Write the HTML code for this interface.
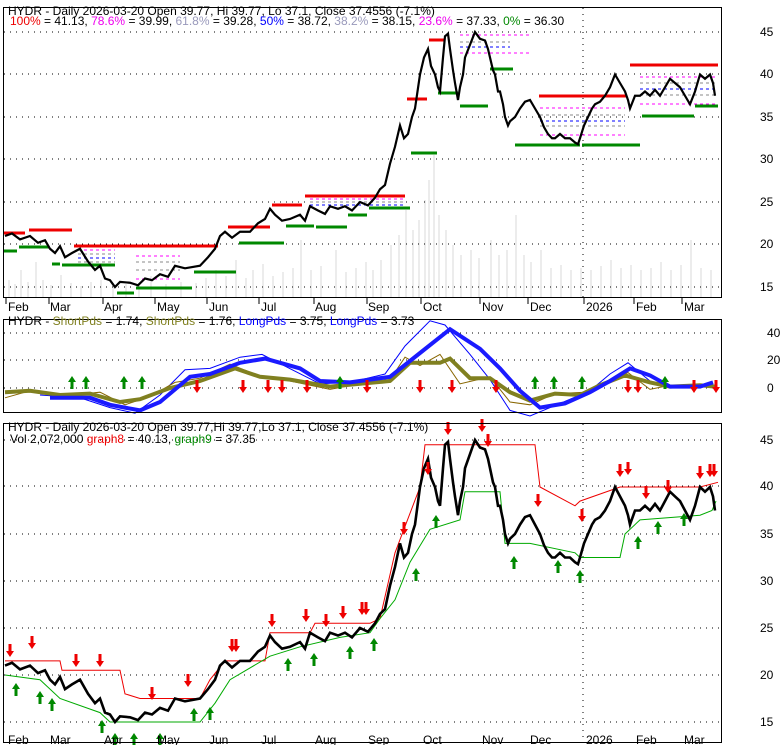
<!DOCTYPE html>
<html><head><meta charset="utf-8"><style>
body{margin:0;background:#fff;width:780px;height:745px;overflow:hidden;font-family:"Liberation Sans",sans-serif}
svg text{font-family:"Liberation Sans",sans-serif;font-size:12px}
</style></head><body>
<svg width="780" height="745" xmlns="http://www.w3.org/2000/svg">
<defs>
<g id="up"><path d="M0,-7 L-4,-1 L-1.5,-1 L-1.5,6 L1.5,6 L1.5,-1 L4,-1Z" fill="#008800"/></g>
<g id="dn"><path d="M0,7 L-4,1 L-1.5,1 L-1.5,-6 L1.5,-6 L1.5,1 L4,1Z" fill="#ee0000"/></g>
</defs>
<!-- PANEL 1 -->
<g fill="#ececec">
<rect x="8" y="280" width="2" height="17"/><rect x="14" y="284" width="2" height="13"/><rect x="20" y="270" width="2" height="27"/><rect x="27" y="282" width="2" height="15"/><rect x="35" y="262" width="2" height="35"/><rect x="42" y="280" width="2" height="17"/><rect x="50" y="285" width="2" height="12"/><rect x="60" y="275" width="2" height="22"/><rect x="70" y="283" width="2" height="14"/><rect x="80" y="286" width="2" height="11"/><rect x="90" y="282" width="2" height="15"/><rect x="100" y="280" width="2" height="17"/><rect x="112" y="285" width="2" height="12"/><rect x="125" y="284" width="2" height="13"/><rect x="138" y="283" width="2" height="14"/><rect x="150" y="276" width="2" height="21"/><rect x="165" y="284" width="2" height="13"/><rect x="180" y="282" width="2" height="15"/><rect x="195" y="283" width="2" height="14"/><rect x="205" y="278" width="2" height="19"/><rect x="215" y="270" width="2" height="27"/><rect x="225" y="276" width="2" height="21"/><rect x="235" y="260" width="2" height="37"/><rect x="245" y="278" width="2" height="19"/><rect x="252" y="270" width="2" height="27"/><rect x="262" y="264" width="2" height="33"/><rect x="272" y="276" width="2" height="21"/><rect x="282" y="272" width="2" height="25"/><rect x="292" y="268" width="2" height="29"/><rect x="300" y="240" width="2" height="57"/><rect x="310" y="270" width="2" height="27"/><rect x="320" y="266" width="2" height="31"/><rect x="335" y="250" width="2" height="47"/><rect x="345" y="272" width="2" height="25"/><rect x="355" y="268" width="2" height="29"/><rect x="365" y="262" width="2" height="35"/><rect x="372" y="270" width="2" height="27"/><rect x="380" y="260" width="2" height="37"/><rect x="390" y="245" width="2" height="52"/><rect x="398" y="235" width="2" height="62"/><rect x="405" y="210" width="2" height="87"/><rect x="412" y="230" width="2" height="67"/><rect x="418" y="220" width="2" height="77"/><rect x="424" y="200" width="2" height="97"/><rect x="428" y="180" width="2" height="117"/><rect x="433" y="155" width="2" height="142"/><rect x="438" y="215" width="2" height="82"/><rect x="445" y="230" width="2" height="67"/><rect x="452" y="245" width="2" height="52"/><rect x="460" y="255" width="2" height="42"/><rect x="470" y="250" width="2" height="47"/><rect x="478" y="258" width="2" height="39"/><rect x="490" y="240" width="2" height="57"/><rect x="498" y="255" width="2" height="42"/><rect x="506" y="250" width="2" height="47"/><rect x="515" y="215" width="2" height="82"/><rect x="523" y="255" width="2" height="42"/><rect x="530" y="262" width="2" height="35"/><rect x="540" y="250" width="2" height="47"/><rect x="550" y="268" width="2" height="29"/><rect x="560" y="265" width="2" height="32"/><rect x="570" y="270" width="2" height="27"/><rect x="580" y="268" width="2" height="29"/><rect x="590" y="270" width="2" height="27"/><rect x="600" y="266" width="2" height="31"/><rect x="610" y="260" width="2" height="37"/><rect x="620" y="268" width="2" height="29"/><rect x="630" y="265" width="2" height="32"/><rect x="640" y="270" width="2" height="27"/><rect x="650" y="268" width="2" height="29"/><rect x="660" y="262" width="2" height="35"/><rect x="670" y="270" width="2" height="27"/><rect x="680" y="265" width="2" height="32"/><rect x="690" y="240" width="2" height="57"/><rect x="700" y="268" width="2" height="29"/><rect x="710" y="270" width="2" height="27"/>
</g>
<g stroke="#000" stroke-dasharray="1,5" stroke-width="1">
<line x1="4" y1="32" x2="722" y2="32"/><line x1="4" y1="74" x2="722" y2="74"/><line x1="4" y1="117" x2="722" y2="117"/><line x1="4" y1="159" x2="722" y2="159"/><line x1="4" y1="202" x2="722" y2="202"/><line x1="4" y1="244" x2="722" y2="244"/><line x1="4" y1="287" x2="722" y2="287"/>
<line x1="583" y1="8" x2="583" y2="297"/>
</g>
<g stroke-width="3">
<g stroke="#ee0000"><line x1="4" y1="233" x2="25" y2="233"/><line x1="29" y1="230" x2="72" y2="230"/><line x1="74" y1="246" x2="218" y2="246"/><line x1="228" y1="227" x2="270" y2="227"/><line x1="272" y1="205" x2="302" y2="205"/><line x1="305" y1="196" x2="405" y2="196"/><line x1="407" y1="99" x2="427" y2="99"/><line x1="429" y1="40" x2="445" y2="40"/><line x1="539" y1="96" x2="627" y2="96"/><line x1="630" y1="65" x2="718" y2="65"/></g>
<g stroke="#008800"><line x1="4" y1="251" x2="17" y2="251"/><line x1="19" y1="247" x2="49" y2="247"/><line x1="52" y1="264" x2="60" y2="264"/><line x1="62" y1="265" x2="115" y2="265"/><line x1="117" y1="293" x2="134" y2="293"/><line x1="136" y1="288" x2="192" y2="288"/><line x1="194" y1="272" x2="236" y2="272"/><line x1="239" y1="243" x2="284" y2="243"/><line x1="286" y1="226" x2="314" y2="226"/><line x1="316" y1="227" x2="347" y2="227"/><line x1="348" y1="215" x2="367" y2="215"/><line x1="369" y1="208" x2="410" y2="208"/><line x1="411" y1="153" x2="437" y2="153"/><line x1="438" y1="93" x2="458" y2="93"/><line x1="460" y1="106" x2="488" y2="106"/><line x1="490" y1="69" x2="513" y2="69"/><line x1="515" y1="145" x2="580" y2="145"/><line x1="582" y1="145" x2="640" y2="145"/><line x1="642" y1="116" x2="694" y2="116"/><line x1="695" y1="106" x2="718" y2="106"/></g>
</g>
<g stroke-width="1" stroke-dasharray="3,3">
<line x1="78" y1="250" x2="115" y2="250" stroke="#f0f"/><line x1="78" y1="254" x2="115" y2="254" stroke="#888"/><line x1="78" y1="258" x2="115" y2="258" stroke="#00f"/><line x1="78" y1="262" x2="115" y2="262" stroke="#888"/>
<line x1="136" y1="256" x2="180" y2="256" stroke="#f0f"/><line x1="136" y1="262" x2="180" y2="262" stroke="#888"/><line x1="136" y1="270" x2="180" y2="270" stroke="#888"/><line x1="136" y1="279" x2="180" y2="279" stroke="#f0f"/>
<line x1="310" y1="199" x2="405" y2="199" stroke="#f0f"/><line x1="310" y1="202" x2="405" y2="202" stroke="#888"/><line x1="310" y1="205" x2="405" y2="205" stroke="#00f"/>
<line x1="540" y1="108" x2="625" y2="108" stroke="#f0f"/><line x1="540" y1="115" x2="625" y2="115" stroke="#888"/><line x1="540" y1="121" x2="625" y2="121" stroke="#00f"/><line x1="540" y1="126" x2="625" y2="126" stroke="#888"/><line x1="540" y1="135" x2="625" y2="135" stroke="#f0f"/>
<line x1="640" y1="77" x2="715" y2="77" stroke="#f0f"/><line x1="640" y1="83" x2="715" y2="83" stroke="#888"/><line x1="640" y1="89" x2="715" y2="89" stroke="#00f"/><line x1="640" y1="95" x2="715" y2="95" stroke="#888"/><line x1="640" y1="104" x2="715" y2="104" stroke="#f0f"/>
<line x1="460" y1="35" x2="530" y2="35" stroke="#f0f"/><line x1="460" y1="42" x2="510" y2="42" stroke="#888"/><line x1="460" y1="47" x2="510" y2="47" stroke="#00f"/><line x1="460" y1="53" x2="530" y2="53" stroke="#f0f"/>
</g>
<polyline transform="matrix(1 0 0 -8.5 0 414.5)" vector-effect="non-scaling-stroke" fill="none" stroke="#000" stroke-width="2.2" points="5,21 12,21.3 20,20.6 30,21 38,20.2 45,20.5 50,19.5 55,19 60,19.8 65,18.5 72,19 80,19.5 88,18 95,17 100,17.5 105,16 110,15.8 115,15 120,15.6 130,15.5 138,15.2 145,16 152,15.8 160,16.5 168,16.2 175,17.5 185,17.2 200,17.5 208,18.5 215,19.5 220,21 225,21.5 232,20.8 240,21.5 250,21.5 258,22.5 265,23 270,24.2 275,23.5 282,22.8 290,23 300,23.5 305,22.8 310,24.5 318,24 325,23.6 330,24.5 338,24.2 345,24.5 352,24 360,25 368,24.6 375,25.5 380,26.5 385,27 390,29.5 395,31.5 400,34 404,32.5 408,33 412,35 415,36 420,40 424,42 428,43 431,41 435,40 438,38.5 440,38 443,42 445,44.5 448,44.8 450,43 453,40.5 455,39 458,37 460,38.5 463,40 465,42 470,43.5 475,45 480,44.2 485,44 488,43 490,42 493,40.5 495,40 498,38 500,38 503,36.5 505,35 508,34 510,34.5 515,35 520,36 525,36.8 530,37 535,36 540,35 544,33.8 548,33 552,32.5 555,32.5 560,33 565,32.5 570,32.5 575,32 578,31.8 580,32.5 584,34 588,35 592,36 595,36.5 600,36.8 605,37.5 610,38.5 615,40 620,39 625,38 628,37 630,36 635,37.5 640,37.5 645,38 650,37.5 655,38.2 660,37.5 665,38.5 670,39.5 675,39 680,38.5 685,37.5 690,36.5 695,38 700,40 705,39.5 710,40 713,39 715,37.5"/>
<rect x="3.5" y="7.5" width="718" height="290" fill="none" stroke="#000"/>
<text x="8" y="15">HYDR - Daily 2026-03-20 Open 39.77, Hi 39.77, Lo 37.1, Close 37.4556 (-7.1%)</text>
<text x="10" y="25"><tspan fill="#e00">100%</tspan> = 41.13, <tspan fill="#e0e">78.6%</tspan> = 39.99, <tspan fill="#99b">61.8%</tspan> = 39.28, <tspan fill="#00f">50%</tspan> = 38.72, <tspan fill="#99b">38.2%</tspan> = 38.15, <tspan fill="#e0e">23.6%</tspan> = 37.33, <tspan fill="#080">0%</tspan> = 36.30</text>
<g><text x="760" y="36">45</text><text x="760" y="78">40</text><text x="760" y="121">35</text><text x="760" y="163">30</text><text x="760" y="206">25</text><text x="760" y="248">20</text><text x="760" y="291">15</text></g>
<g stroke="#000"><line x1="6" y1="298" x2="6" y2="304"/><line x1="49" y1="298" x2="49" y2="304"/><line x1="103" y1="298" x2="103" y2="304"/><line x1="155" y1="298" x2="155" y2="304"/><line x1="207" y1="298" x2="207" y2="304"/><line x1="259" y1="298" x2="259" y2="304"/><line x1="314" y1="298" x2="314" y2="304"/><line x1="367" y1="298" x2="367" y2="304"/><line x1="421" y1="298" x2="421" y2="304"/><line x1="480" y1="298" x2="480" y2="304"/><line x1="528" y1="298" x2="528" y2="304"/><line x1="584" y1="298" x2="584" y2="304"/><line x1="634" y1="298" x2="634" y2="304"/><line x1="682" y1="298" x2="682" y2="304"/></g>
<g><text x="8" y="311">Feb</text><text x="50" y="311">Mar</text><text x="104" y="311">Apr</text><text x="157" y="311">May</text><text x="209" y="311">Jun</text><text x="261" y="311">Jul</text><text x="315" y="311">Aug</text><text x="368" y="311">Sep</text><text x="423" y="311">Oct</text><text x="482" y="311">Nov</text><text x="530" y="311">Dec</text><text x="586" y="311">2026</text><text x="636" y="311">Feb</text><text x="684" y="311">Mar</text></g>
<!-- PANEL 2 -->
<g stroke="#000" stroke-dasharray="1,5"><line x1="4" y1="333" x2="722" y2="333"/><line x1="4" y1="360" x2="722" y2="360"/><line x1="4" y1="388" x2="722" y2="388"/></g>
<polyline transform="matrix(1 0 0 -1.4 0 388)" vector-effect="non-scaling-stroke" fill="none" stroke="#00f" stroke-width="1" points="40,-5 80,-7 110,-14 135,-18 160,-5 185,13 210,14 240,22 262,24 295,12 320,3 350,4 385,10 405,30 430,48 445,45 470,24 490,6 510,-16 530,-20 560,-11 590,-2 610,10 628,18 650,5 670,1 700,2"/>
<polyline transform="matrix(1 0 0 -1.4 0 388)" vector-effect="non-scaling-stroke" fill="none" stroke="#886600" stroke-width="1" points="5,-7 30,-2 60,-6 100,-3 125,-12 150,-6 175,4 200,7 230,17 258,9 290,5 330,-1 360,3 390,6 405,22 420,16 440,24 460,3 490,8 510,-10 530,-12 555,-4 585,-3 610,6 628,11 650,-1 670,2 700,1"/>
<polyline transform="matrix(1 0 0 -1.4 0 388)" vector-effect="non-scaling-stroke" fill="none" stroke="#808020" stroke-width="4" points="5,-3 30,-2 60,-5 90,-4 120,-10 140,-8 170,0 200,5 235,14 260,8 290,6 330,1 360,3 390,5 410,18 440,18 450,21 470,7 490,7 510,-3 530,-9 555,-4 580,-5 600,2 625,9 650,4 670,1 700,2 715,1"/>
<polyline transform="matrix(1 0 0 -1.4 0 388)" vector-effect="non-scaling-stroke" fill="none" stroke="#1a1aff" stroke-width="4" points="50,-7 90,-7 110,-12 140,-16 160,-10 190,8 210,10 240,18 265,21 300,14 320,5 350,4 390,8 420,25 450,42 480,28 500,14 520,-2 540,-14 565,-11 590,-3 610,5 630,14 650,9 670,1 700,1 713,4"/>
<g><use href="#up" x="72" y="383"/><use href="#up" x="86" y="383"/><use href="#up" x="124" y="383"/><use href="#up" x="142" y="383"/><use href="#up" x="340" y="383"/><use href="#up" x="535" y="383"/><use href="#up" x="554" y="383"/><use href="#up" x="582" y="383"/><use href="#up" x="665" y="383"/>
<use href="#dn" x="197" y="386"/><use href="#dn" x="243" y="386"/><use href="#dn" x="268" y="386"/><use href="#dn" x="282" y="386"/><use href="#dn" x="307" y="386"/><use href="#dn" x="367" y="386"/><use href="#dn" x="420" y="386"/><use href="#dn" x="452" y="386"/><use href="#dn" x="496" y="386"/><use href="#dn" x="628" y="386"/><use href="#dn" x="638" y="386"/><use href="#dn" x="694" y="386"/><use href="#dn" x="716" y="386"/></g>
<rect x="3.5" y="319.5" width="718" height="93" fill="none" stroke="#000"/>
<text x="8" y="325">HYDR - <tspan fill="#808020">ShortPds</tspan> = 1.74, <tspan fill="#808020">ShortPds</tspan> = 1.76, <tspan fill="#00f">LongPds</tspan> = 3.75, <tspan fill="#00f">LongPds</tspan> = 3.73</text>
<text x="767" y="337">40</text><text x="767" y="364">20</text><text x="767" y="392">0</text>
<!-- PANEL 3 -->
<g stroke="#000" stroke-dasharray="1,5"><line x1="4" y1="440" x2="722" y2="440"/><line x1="4" y1="486" x2="722" y2="486"/><line x1="4" y1="534" x2="722" y2="534"/><line x1="4" y1="581" x2="722" y2="581"/><line x1="4" y1="628" x2="722" y2="628"/><line x1="4" y1="675" x2="722" y2="675"/><line x1="4" y1="722" x2="722" y2="722"/><line x1="583" y1="424" x2="583" y2="742"/></g>
<polyline transform="matrix(1 0 0 -9.4 0 863)" vector-effect="non-scaling-stroke" fill="none" stroke="#ee0000" stroke-width="1" points="5,21.5 60,21.5 62,20.5 120,20.5 125,18 140,17.5 200,17.5 210,19.5 225,21.5 265,21.5 270,24.5 310,24.5 315,25.5 370,25.5 380,26 395,33 420,40 425,44.5 535,44.5 540,40 575,38 580,38.5 620,40 700,40 718,40.5"/>
<polyline transform="matrix(1 0 0 -9.4 0 863)" vector-effect="non-scaling-stroke" fill="none" stroke="#00aa00" stroke-width="1" points="5,20 40,19.5 60,17.5 100,16 110,15 200,15 215,17 230,19.5 270,22 300,23 340,24 370,24.5 380,26 395,28 410,32 430,35.5 460,36.5 465,39.5 500,39.5 505,34 530,34 575,33 580,32.5 620,32.5 625,35 640,36.5 700,37 712,37.5 716,38.5"/>
<polyline transform="matrix(1 0 0 -9.4 0 863)" vector-effect="non-scaling-stroke" fill="none" stroke="#000" stroke-width="2.6" points="5,21 12,21.3 20,20.6 30,21 38,20.2 45,20.5 50,19.5 55,19 60,19.8 65,18.5 72,19 80,19.5 88,18 95,17 100,17.5 105,16 110,15.8 115,15 120,15.6 130,15.5 138,15.2 145,16 152,15.8 160,16.5 168,16.2 175,17.5 185,17.2 200,17.5 208,18.5 215,19.5 220,21 225,21.5 232,20.8 240,21.5 250,21.5 258,22.5 265,23 270,24.2 275,23.5 282,22.8 290,23 300,23.5 305,22.8 310,24.5 318,24 325,23.6 330,24.5 338,24.2 345,24.5 352,24 360,25 368,24.6 375,25.5 380,26.5 385,27 390,29.5 395,31.5 400,34 404,32.5 408,33 412,35 415,36 420,40 424,42 428,43 431,41 435,40 438,38.5 440,38 443,42 445,44.5 448,44.8 450,43 453,40.5 455,39 458,37 460,38.5 463,40 465,42 470,43.5 475,45 480,44.2 485,44 488,43 490,42 493,40.5 495,40 498,38 500,38 503,36.5 505,35 508,34 510,34.5 515,35 520,36 525,36.8 530,37 535,36 540,35 544,33.8 548,33 552,32.5 555,32.5 560,33 565,32.5 570,32.5 575,32 578,31.8 580,32.5 584,34 588,35 592,36 595,36.5 600,36.8 605,37.5 610,38.5 615,40 620,39 625,38 628,37 630,36 635,37.5 640,37.5 645,38 650,37.5 655,38.2 660,37.5 665,38.5 670,39.5 675,39 680,38.5 685,37.5 690,36.5 695,38 700,40 705,39.5 710,40 713,39 715,37.5"/>
<g><use href="#dn" x="10" y="650"/><use href="#dn" x="32" y="642"/><use href="#dn" x="76" y="660"/><use href="#dn" x="100" y="660"/><use href="#dn" x="152" y="693"/><use href="#dn" x="188" y="680"/><use href="#dn" x="232" y="645"/><use href="#dn" x="236" y="645"/><use href="#dn" x="272" y="620"/><use href="#dn" x="306" y="615"/><use href="#dn" x="326" y="620"/><use href="#dn" x="343" y="612"/><use href="#dn" x="362" y="608"/><use href="#dn" x="366" y="608"/><use href="#dn" x="404" y="528"/><use href="#dn" x="428" y="468"/><use href="#dn" x="448" y="428"/><use href="#dn" x="482" y="425"/><use href="#dn" x="488" y="440"/><use href="#dn" x="538" y="500"/><use href="#dn" x="582" y="515"/><use href="#dn" x="620" y="470"/><use href="#dn" x="628" y="468"/><use href="#dn" x="646" y="492"/><use href="#dn" x="668" y="486"/><use href="#dn" x="700" y="472"/><use href="#dn" x="710" y="470"/><use href="#dn" x="714" y="470"/>
<use href="#up" x="16" y="690"/><use href="#up" x="40" y="698"/><use href="#up" x="52" y="705"/><use href="#up" x="102" y="727"/><use href="#up" x="115" y="740"/><use href="#up" x="134" y="740"/><use href="#up" x="160" y="740"/><use href="#up" x="194" y="715"/><use href="#up" x="210" y="714"/><use href="#up" x="288" y="665"/><use href="#up" x="314" y="660"/><use href="#up" x="350" y="653"/><use href="#up" x="374" y="645"/><use href="#up" x="416" y="575"/><use href="#up" x="436" y="522"/><use href="#up" x="514" y="563"/><use href="#up" x="558" y="567"/><use href="#up" x="580" y="577"/><use href="#up" x="638" y="543"/><use href="#up" x="658" y="528"/><use href="#up" x="684" y="520"/></g>
<rect x="3.5" y="423.5" width="718" height="319" fill="none" stroke="#000"/>
<text x="8" y="431">HYDR - Daily 2026-03-20 Open 39.77,Hi 39.77,Lo 37.1, Close 37.4556 (-7.1%)</text>
<text x="10" y="443">Vol 2,072,000 <tspan fill="#e00">graph8</tspan> = 40.13, <tspan fill="#080">graph9</tspan> = 37.35</text>
<text x="760" y="444">45</text><text x="760" y="490">40</text><text x="760" y="538">35</text><text x="760" y="585">30</text><text x="760" y="632">25</text><text x="760" y="679">20</text><text x="760" y="726">15</text>
<g><text x="8" y="744">Feb</text><text x="50" y="744">Mar</text><text x="104" y="744">Apr</text><text x="157" y="744">May</text><text x="209" y="744">Jun</text><text x="261" y="744">Jul</text><text x="315" y="744">Aug</text><text x="368" y="744">Sep</text><text x="423" y="744">Oct</text><text x="482" y="744">Nov</text><text x="530" y="744">Dec</text><text x="586" y="744">2026</text><text x="636" y="744">Feb</text><text x="684" y="744">Mar</text></g>
</svg>
</body></html>
